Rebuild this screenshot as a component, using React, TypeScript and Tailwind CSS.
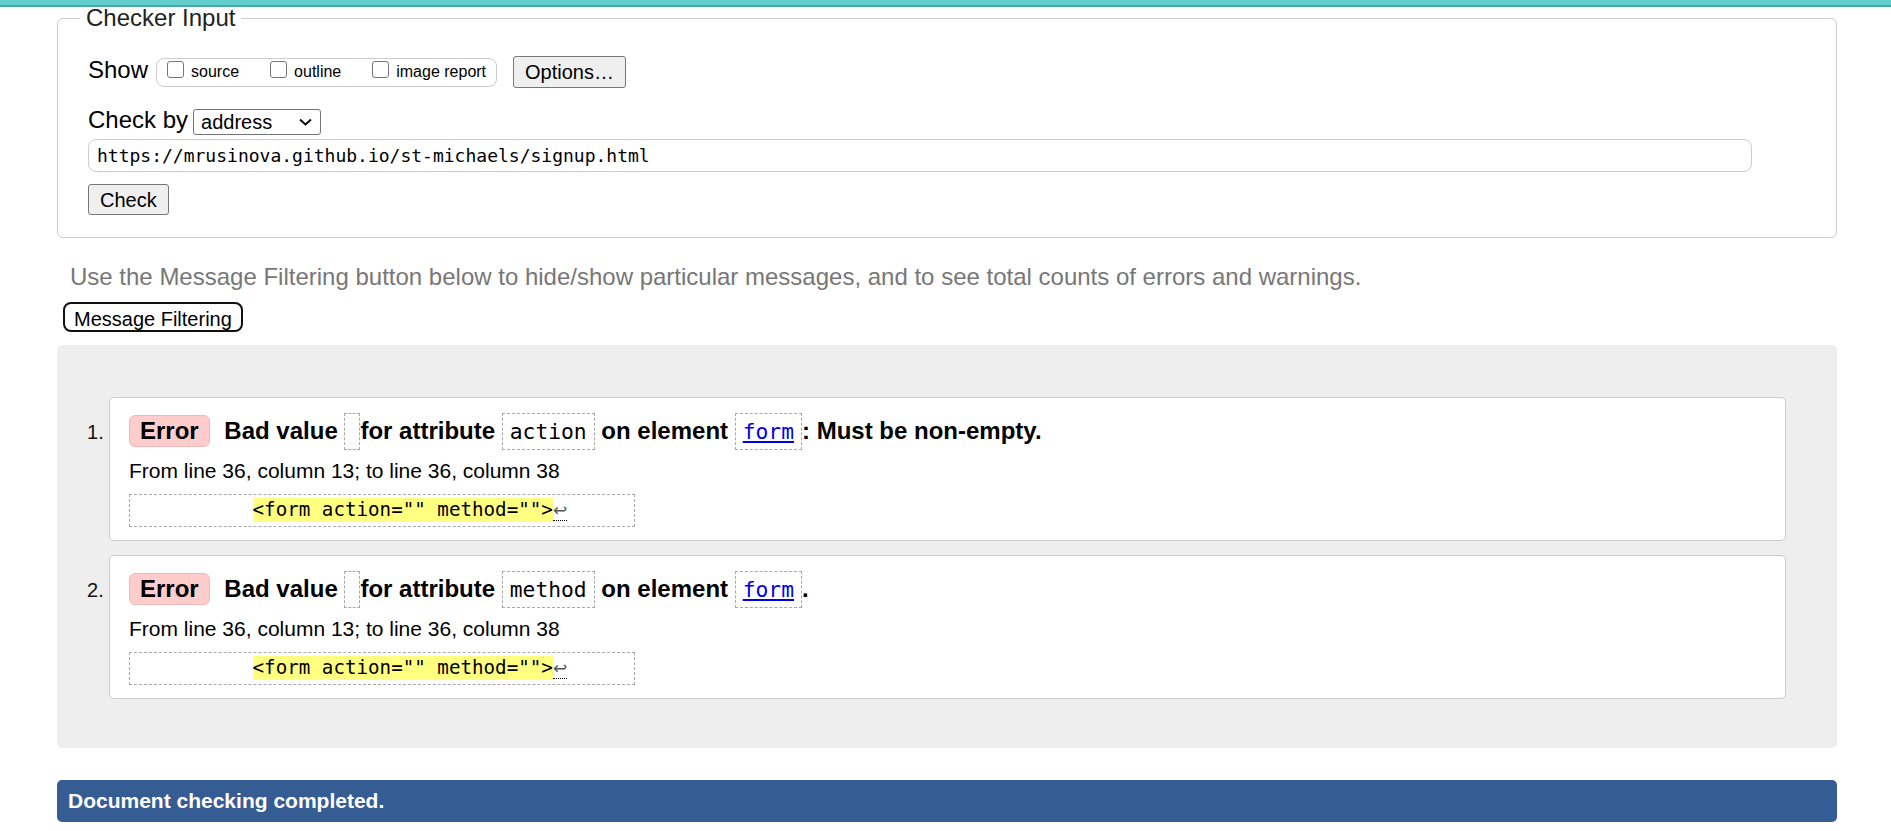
import React from 'react';

const mono = "font-['DejaVu_Sans_Mono','Liberation_Mono',monospace]";

const Checkbox = ({ label, first }: { label: string; first?: boolean }) => (
  <div className={`flex items-center ${first ? '' : 'ml-[31px]'}`}>
    <span className="mb-[6px] w-[17px] h-[17px] rounded-[3px] border border-[#767676] bg-white" />
    <span className="ml-[7px] text-[16px] leading-[18px]">{label}</span>
  </div>
);

const CodeBox = ({ children }: { children: React.ReactNode }) => (
  <code
    className={`${mono} inline-block align-baseline border border-dashed border-[#a8a8a8] px-[7px] py-[5px] text-[21.3px] leading-[25px] font-normal`}
  >
    {children}
  </code>
);

// the empty value shows as a bare dashed box
const EmptyBox = () => (
  <span className="inline-block w-[16px] h-[37px] align-[-11px] border border-dashed border-[#a8a8a8]" />
);

const Message = ({ n, attr, tail }: { n: number; attr: string; tail: string }) => (
  <li className="flex items-baseline">
    <span className="w-[22px] text-[20px] text-[#111]">{n}.</span>
    <div className="flex-1 bg-white border border-[#ccc] rounded-[5px] pl-[19px] pt-[15px] pb-[13px]">
      <div className="text-[24px] font-bold leading-[28px] whitespace-nowrap">
        <span className="inline-block mr-[8px] px-[10px] py-[1px] border border-[#f0b9b9] bg-[#ffcccc] rounded-[6px]">
          Error
        </span>{' '}
        Bad value <EmptyBox />for attribute <CodeBox>{attr}</CodeBox> on element{' '}
        <CodeBox>
          <a href="#" className="text-[#0000ee] underline">form</a>
        </CodeBox>
        {tail}
      </div>
      <div className="mt-[8px] text-[21px] leading-[26px]">From line 36, column 13; to line 36, column 38</div>
      <div
        className={`${mono} mt-[10px] w-[506px] border border-dashed border-[#a8a8a8] pt-[3px] pb-[4px] pl-[7px] text-[19.2px] leading-[24px] whitespace-pre`}
      >
        {'          '}
        <span className="inline-block bg-[#ffff80] leading-[24px]">{'<form action="" method="">'}</span>
        <span className="font-['DejaVu_Sans',sans-serif] text-[17px] text-[#555] border-b border-dotted border-black">↩</span>
      </div>
    </div>
  </li>
);

export default function App() {
  return (
    <div className="min-h-screen bg-white text-black font-['Liberation_Sans',Arial,sans-serif]">
      <div className="h-[7px] bg-[#62cfce] border-b-2 border-[#48a7a7]" />

      <div className="ml-[57px] w-[1780px]">
        <fieldset className="border border-[#ccc] rounded-[6px] px-[30px] pt-[27px] pb-[22px]">
          <legend className="-ml-[8px] px-[6px] text-[24px] leading-[22px] text-[#222]">Checker Input</legend>

          <div className="flex items-center h-[32px]">
            <span className="text-[24px] leading-[28px] pb-[4px]">Show</span>
            <div className="ml-[8px] flex items-center h-[29px] px-[10px] border border-[#ccc] rounded-[8px]">
              <Checkbox label="source" first />
              <Checkbox label="outline" />
              <Checkbox label="image report" />
            </div>
            <button className="ml-[16px] h-[32px] px-[11px] text-[20px] bg-[#efefef] border border-[#767676] rounded-[3px]">
              Options…
            </button>
          </div>

          <div className="mt-[21px] flex items-center h-[26px]">
            <span className="text-[24px] leading-[28px] pb-[4px]">Check by</span>
            <div className="ml-[5px] w-[128px] h-[26px] flex items-center pl-[7px] border border-[#767676] rounded-[3px] text-[20px]">
              address
              <svg className="ml-auto mr-[8px]" width="13" height="8" viewBox="0 0 13 8">
                <path d="M1 1.5 L6.5 6.5 L12 1.5" fill="none" stroke="#000" strokeWidth="1.8" />
              </svg>
            </div>
          </div>

          <div className={`${mono} mt-[4px] h-[33px] w-[1664px] flex items-center pl-[8px] border border-[#ccc] rounded-[8px] text-[18px]`}>
            https://mrusinova.github.io/st-michaels/signup.html
          </div>

          <button className="mt-[12px] h-[31px] px-[11px] text-[20px] bg-[#efefef] border border-[#767676] rounded-[3px]">
            Check
          </button>
        </fieldset>

        <p className="mt-[25px] pl-[13px] text-[24px] leading-[28px] text-[#777]">
          Use the Message Filtering button below to hide/show particular messages, and to see total counts of errors and warnings.
        </p>

        <button className="mt-[11px] ml-[6px] h-[30px] px-[9px] text-[20px] bg-white border-2 border-[#111] rounded-[8px]">
          Message Filtering
        </button>

        <div className="mt-[12px] bg-[#eeeeee] rounded-[5px] pt-[52px] pb-[49px] pl-[30px] pr-[51px]">
          <ol className="flex flex-col gap-[14px]">
            <Message n={1} attr="action" tail=": Must be non-empty." />
            <Message n={2} attr="method" tail="." />
          </ol>
        </div>

        <div className="mt-[32px] h-[42px] flex items-center px-[11px] bg-[#365c94] rounded-[5px] text-white font-bold text-[21px]">
          Document checking completed.
        </div>
      </div>
    </div>
  );
}
